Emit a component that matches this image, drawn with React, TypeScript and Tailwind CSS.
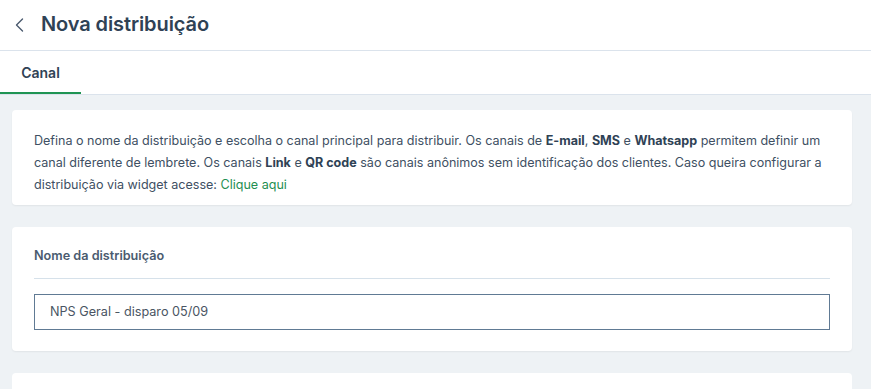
import React from "react";

export default function App() {
  return (
    <div
      className="w-[871px] h-[389px] overflow-hidden bg-[#eef2f5] flex flex-col"
      style={{ fontFamily: "Inter, 'Noto Sans', sans-serif" }}
    >
      <header className="h-[51px] shrink-0 bg-white border-b border-[#dbe3ec] flex items-center">
        <button className="ml-[13px] w-[12px] h-[20px] flex items-center justify-center text-[#4a5a6e]">
          <svg width="9" height="14" viewBox="0 0 9 14" fill="none">
            <path d="M7.5 1L1.5 7L7.5 13" stroke="currentColor" strokeWidth="1.4" strokeLinecap="round" strokeLinejoin="round" />
          </svg>
        </button>
        <h1 className="ml-[16px] text-[20px] font-semibold text-[#2f4255] tracking-[-0.1px] pb-[2px]">
          Nova distribuição
        </h1>
      </header>
      <nav className="h-[44px] shrink-0 bg-white border-b border-[#dbe3ec] flex">
        <div className="w-[81px] flex items-center justify-center border-b-2 border-[#1f9453] text-[14px] font-semibold text-[#2f4255] pt-[1px]">
          Canal
        </div>
      </nav>
      <main className="flex flex-col gap-[22px] pl-[12px] pr-[19px] pt-[15px]">
        <section className="bg-white rounded-[4px] shadow-[0_1px_2px_rgba(0,0,0,0.06)] pl-[22px] pr-[22px] pt-[20px] pb-[9px]">
          <p className="text-[12.55px] leading-[22px] text-[#405063]">
            Defina o nome da distribuição e escolha o canal principal para distribuir. Os canais de{" "}
            <b className="font-bold text-[#2f4255]">E-mail</b>, <b className="font-bold text-[#2f4255]">SMS</b> e{" "}
            <b className="font-bold text-[#2f4255]">Whatsapp</b> permitem definir um canal diferente de lembrete. Os
            canais <b className="font-bold text-[#2f4255]">Link</b> e{" "}
            <b className="font-bold text-[#2f4255]">QR code</b> são canais anônimos sem identificação dos clientes. Caso
            queira configurar a distribuição via widget acesse:{" "}
            <a className="text-[#1f8f52]">Clique aqui</a>
          </p>
        </section>
        <section className="bg-white rounded-[4px] shadow-[0_1px_2px_rgba(0,0,0,0.06)] px-[22px] pt-[20px] pb-[21px]">
          <div className="text-[12.65px] font-semibold text-[#4a5b70] leading-[18px]">Nome da distribuição</div>
          <div className="mt-[13px] h-px bg-[#d6e1ea]" />
          <div className="mt-[15px] h-[36px] border border-[#607a94] flex items-center pl-[15px] text-[12.65px] text-[#4a5563]">
            NPS Geral - disparo 05/09
          </div>
        </section>
        <section className="bg-white rounded-[4px] h-[60px]" />
      </main>
    </div>
  );
}
